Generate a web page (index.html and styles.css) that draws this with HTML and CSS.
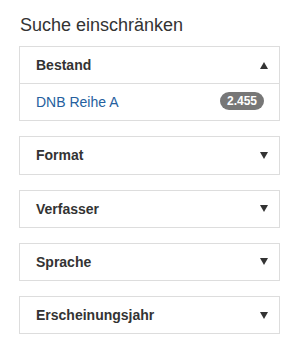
FILE: index.html
```html
<!DOCTYPE html>
<html lang="de">
<head>
<meta charset="UTF-8" />
<meta name="viewport" content="width=device-width, initial-scale=1" />
<title>Suche einschränken</title>
<link rel="stylesheet" href="styles.css">
</head>
<body>

<h3 class="titel">Suche einschränken</h3>

<div class="facetten">

  <!-- BESTAND (offen) -->
  <div class="facette">
    <div class="kopf">
      <span>Bestand</span>
      <svg class="pfeil" width="8" height="7" viewBox="0 0 8 7"><path d="M4 0 L8 7 L0 7 Z" /></svg>
    </div>
    <div class="eintrag">
      <a href="#">DNB Reihe A</a>
      <span class="badge">2.455</span>
    </div>
  </div>

  <div class="facette">
    <div class="kopf">
      <span>Format</span>
      <svg class="pfeil" width="8" height="7" viewBox="0 0 8 7"><path d="M0 0 L8 0 L4 7 Z" /></svg>
    </div>
  </div>

  <div class="facette">
    <div class="kopf">
      <span>Verfasser</span>
      <svg class="pfeil" width="8" height="7" viewBox="0 0 8 7"><path d="M0 0 L8 0 L4 7 Z" /></svg>
    </div>
  </div>

  <div class="facette">
    <div class="kopf">
      <span>Sprache</span>
      <svg class="pfeil" width="8" height="7" viewBox="0 0 8 7"><path d="M0 0 L8 0 L4 7 Z" /></svg>
    </div>
  </div>

  <div class="facette">
    <div class="kopf">
      <span>Erscheinungsjahr</span>
      <svg class="pfeil" width="8" height="7" viewBox="0 0 8 7"><path d="M0 0 L8 0 L4 7 Z" /></svg>
    </div>
  </div>

</div>

</body>
</html>
```

FILE: styles.css
```css
/* BASIS */
* {
  box-sizing: border-box;
}
body {
  font-family: "Liberation Sans", Arial, Helvetica, sans-serif;
  font-size: 14px;
  color: #333333;
  background: #ffffff;
  margin: 0;
  padding: 14px 18px 0 19px;
}

/* TITEL */
.titel {
  font-size: 18px;
  font-weight: normal;
  line-height: 22px;
  margin: 0 0 10px 1px;
  color: #333333;
}

/* FACETTEN */
.facetten {
  display: flex;
  flex-direction: column;
  gap: 15px;
}
.facette {
  border: 1px solid #dddddd;
  background: #ffffff;
}
.kopf {
  display: flex;
  justify-content: space-between;
  align-items: center;
  padding: 10px 11px 10px 16px;
  line-height: 16.2px;
  font-weight: 700;
  color: #333333;
}
.pfeil {
  display: block;
  fill: #333333;
}

/* EINTRAG */
.eintrag {
  display: flex;
  justify-content: space-between;
  align-items: center;
  border-top: 1px solid #dddddd;
  padding: 10px 15px 10px 16px;
  line-height: 16.2px;
}
.eintrag a {
  color: #25609e;
  text-decoration: none;
}
.badge {
  display: inline-block;
  background: #777777;
  color: #ffffff;
  font-size: 12px;
  font-weight: 700;
  line-height: 12px;
  padding: 3px 7px;
  border-radius: 10px;
  margin-top: -2px;
}
```
